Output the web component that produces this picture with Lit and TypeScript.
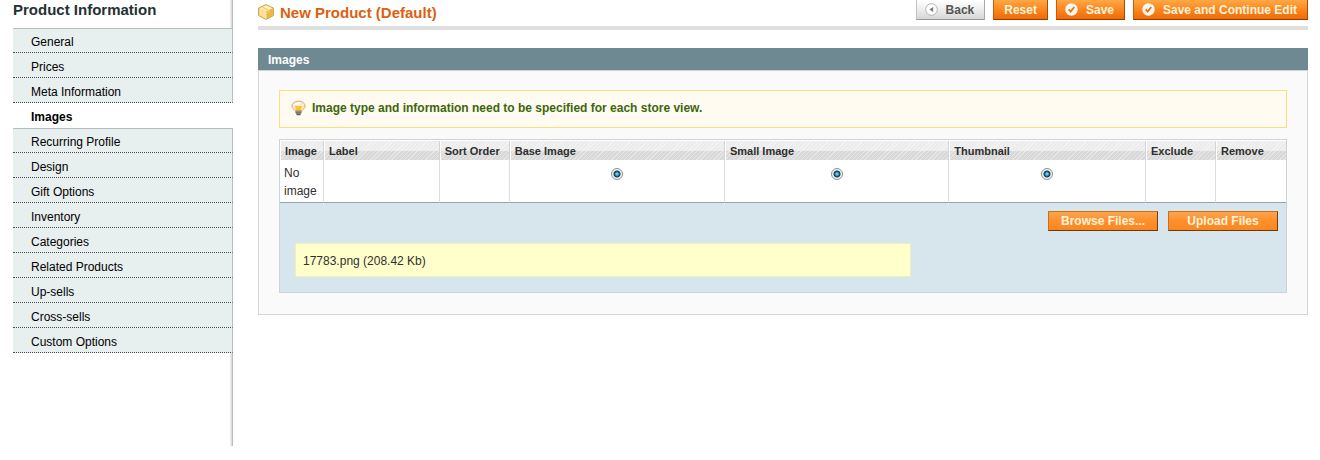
import { LitElement, html, css } from "lit";
import { customElement, state } from "lit/decorators.js";
import { classMap } from "lit/directives/class-map.js";

const TABS = [
  "General",
  "Prices",
  "Meta Information",
  "Images",
  "Recurring Profile",
  "Design",
  "Gift Options",
  "Inventory",
  "Categories",
  "Related Products",
  "Up-sells",
  "Cross-sells",
  "Custom Options",
];

const COLUMNS = [
  { id: "image", label: "Image" },
  { id: "label", label: "Label" },
  { id: "sort", label: "Sort Order" },
  { id: "base", label: "Base Image", radio: true },
  { id: "small", label: "Small Image", radio: true },
  { id: "thumb", label: "Thumbnail", radio: true },
  { id: "exclude", label: "Exclude" },
  { id: "remove", label: "Remove" },
];

const boxIcon = html`<svg class="icon-box" viewBox="0 0 16 16" aria-hidden="true">
  <path d="M8 0.6 L15.4 4 V11.6 L8 15.4 L0.6 11.6 V4 Z" fill="#f3c65c" stroke="#cf9f45" stroke-width="1" stroke-linejoin="round" />
  <path d="M8 1.2 L14.6 4.3 L8 7.6 L1.4 4.3 Z" fill="#fdf0cb" />
  <path d="M8 7.6 L14.9 4.4 V11.3 L8 14.9 Z" fill="#ecb544" />
  <path d="M1.2 4.6 L8 7.8 V14.8 L1.2 11.3 Z" fill="#fbe09a" />
  <path d="M5 2.7 L11.4 5.8 V8.6 L9.6 9.5 V6.8 L3.2 3.5 Z" fill="#f6cf74" />
  <path d="M8 7.7 V14.6" stroke="#fff3cf" stroke-width="0.7" />
</svg>`;

const bulbIcon = html`<svg class="icon-bulb" viewBox="0 0 16 16" aria-hidden="true">
  <path d="M8 0.7 C4 0.7 1 3 1 5.9 C1 8.4 3.4 9.4 4.6 11 H11.4 C12.6 9.4 15 8.4 15 5.9 C15 3 12 0.7 8 0.7 Z" fill="#fdeccb" stroke="#dba070" stroke-width="1" />
  <path d="M4.2 5.8 H11.8 L10.6 11 H5.4 Z" fill="#fbc52f" />
  <path d="M3.6 4 C5 2 8 1.8 9.6 2.4 L8.6 4.8 H3.8 Z" fill="#fff" />
  <path d="M4.8 10.8 H11.2 V13 L9.8 15.6 H6.2 L4.8 13 Z" fill="#62625e" />
  <path d="M4.8 11.9 H11.2 M5.4 13.5 H10.6" stroke="#c4c4bd" stroke-width="0.6" />
</svg>`;

const checkIcon = html`<svg class="icon" viewBox="0 0 13 13" aria-hidden="true">
  <circle cx="6.5" cy="6.5" r="6.2" fill="#fff6ea" />
  <path d="M3.7 6.4 L5.7 8.6 L9.3 4" fill="none" stroke="#dd7425" stroke-width="1.8" />
</svg>`;

const backIcon = html`<svg class="icon" viewBox="0 0 13 13" aria-hidden="true">
  <circle cx="6.5" cy="6.5" r="5.8" fill="#fff" stroke="#b4b4b4" stroke-width="1" />
  <path d="M8.2 4 V9 L4.4 6.5 Z" fill="#777" />
</svg>`;

@customElement("app-root")
export class AppRoot extends LitElement {
  @state() private active = "Images";

  static styles = css`
    :host {
      display: block;
      font: 12px/18px "Liberation Sans", Arial, sans-serif;
      color: #2f2f2f;
      background: #fff;
    }
    * {
      box-sizing: border-box;
    }
    .page {
      display: grid;
      grid-template-columns: 220px minmax(0, 1fr);
      column-gap: 25px;
      min-height: calc(100vh - 14px);
      margin-bottom: 14px;
      padding: 0 12px 0 13px;
    }
    .side {
      background: linear-gradient(90deg, #ececec 0 1px, #dedede 1px 2px, #b9bdbd 2px 3px) right / 3px 100% no-repeat;
    }
    .side-title {
      margin: 0;
      height: 28px;
      font-size: 15px;
      line-height: 20px;
      color: #253033;
    }
    .tabs {
      list-style: none;
      margin: 0;
      padding: 0;
    }
    .tab {
      display: block;
      height: 25px;
      padding: 5px 18px 0;
      line-height: 18px;
      color: #000;
      text-decoration: none;
      background: #e7efef;
      border-right: 1px solid #b4c0c0;
      border-bottom: 1px dotted #45494b;
    }
    .tab.edge {
      border-top: 1px solid #b4bebf;
      padding-top: 4px;
    }
    .tab.current {
      background: #fff;
      font-weight: bold;
      border-color: #fff;
    }
    .head {
      display: flex;
      justify-content: space-between;
      height: 30px;
      border-bottom: 4px solid #dfdfdf;
    }
    .title {
      display: flex;
      gap: 6px;
      margin: 0;
      padding-top: 4px;
      font-size: 15px;
      line-height: 18px;
      color: #dd5f10;
    }
    .icon-box {
      width: 16px;
      height: 16px;
    }
    .actions {
      display: flex;
      gap: 8px;
      height: 20px;
    }
    .btn {
      display: flex;
      align-items: center;
      justify-content: center;
      gap: 8px;
      padding: 0 10px;
      font: bold 12px/18px "Liberation Sans", Arial, sans-serif;
      color: #fff3dd;
      border: 1px solid #cf5a08;
      border-bottom-color: #8f3d05;
      border-right-color: #a94a08;
      background: linear-gradient(#ffa845, #fb8a22 45%, #f06a05);
    }
    .actions .btn {
      border-top: 0;
    }
    .btn.with-icon {
      padding-left: 8px;
    }
    .btn.back {
      color: #555;
      border-color: #c4c4c4 #a8a8a8 #989898 #c4c4c4;
      background: linear-gradient(#fff, #ededed 50%, #d6d6d6);
    }
    .icon {
      width: 13px;
      height: 13px;
    }
    .panel {
      margin-top: 18px;
    }
    .panel-title {
      margin: 0;
      padding: 3px 10px 1px;
      font-size: 12px;
      line-height: 18px;
      color: #fff;
      background: #6f8992;
    }
    .panel-body {
      padding: 19px 20px 21px;
      border: 1px solid #d6d6d6;
      border-top-color: #cdd3d5;
      background: #fafafa;
    }
    .note {
      display: flex;
      align-items: center;
      gap: 6px;
      margin: 0 0 11px;
      padding: 8px 11px 10px;
      font-weight: bold;
      color: #3d6611;
      border: 1px solid #fcdf7c;
      background: #fffbf0;
    }
    .icon-bulb {
      width: 15px;
      height: 16px;
    }
    .gallery {
      border: 1px solid #cbd3d4;
      background: #fff;
    }
    table {
      width: 100%;
      table-layout: fixed;
      border-collapse: separate;
      border-spacing: 0;
      padding-top: 1px;
    }
    .c-image {
      width: 44px;
    }
    .c-label {
      width: 11.5%;
    }
    .c-sort,
    .c-exclude,
    .c-remove {
      width: 70px;
    }
    .c-base {
      width: 21.4%;
    }
    .c-small {
      width: 22.3%;
    }
    th {
      height: 19px;
      padding: 1px 0 0 4px;
      text-align: left;
      font-size: 11px;
      line-height: 18px;
      white-space: nowrap;
      border-right: 1px solid #cfd4d4;
      border-left: 1px solid #fff;
      background:
        repeating-linear-gradient(135deg, rgba(255, 255, 255, 0.35) 0 1px, transparent 1px 3px),
        linear-gradient(#ececec 0 10px, #d8d8d8 10px);
      background-clip: padding-box;
    }
    td {
      height: 43px;
      padding: 4px 4px 1px;
      vertical-align: top;
      border-right: 1px solid #dadfe0;
      border-bottom: 1px solid #95a5a9;
    }
    th:last-child,
    td:last-child {
      border-right: 0;
    }
    .radio {
      appearance: none;
      display: block;
      width: 12px;
      height: 12px;
      margin: 4px auto 0;
      border: 1px solid #8a8f90;
      border-radius: 50%;
      background: #f4f6f6;
    }
    .radio:checked {
      background: radial-gradient(circle at 5px 5px, #6cc4ea 0 1px, #23739f 2px, #12384f 3px, #f4f6f6 4px);
    }
    .uploader {
      padding: 8px 8px 15px;
      background: #d7e5ed;
    }
    .upload-actions {
      display: flex;
      justify-content: flex-end;
      gap: 10px;
    }
    .upload-actions .btn {
      width: 110px;
      height: 20px;
      border-color: #c8711d #7c3c0a #70370a #c8711d;
      background: linear-gradient(#fba550, #ff8f2a 50%, #fb8720);
    }
    .file {
      width: 616px;
      max-width: 100%;
      margin: 12px 0 0 7px;
      padding: 8px 7px 6px;
      border: 1px solid #eeeec0;
      background: #ffffcc;
    }
  `;

  private select(e: Event, name: string) {
    e.preventDefault();
    this.active = name;
  }

  render() {
    return html`
      <div class="page">
        <nav class="side" aria-labelledby="side-title">
          <h3 class="side-title" id="side-title">Product Information</h3>
          <ul class="tabs">
            ${TABS.map(
              (name, i) => html`<li>
                <a
                  href="#"
                  class=${classMap({
                    tab: true,
                    current: name === this.active,
                    edge: i === 0 || TABS[i - 1] === this.active,
                  })}
                  @click=${(e: Event) => this.select(e, name)}
                  >${name}</a
                >
              </li>`
            )}
          </ul>
        </nav>
        <main>
          <header class="head">
            <h1 class="title">${boxIcon}<span>New Product (Default)</span></h1>
            <div class="actions">
              <button class="btn with-icon back" type="button">${backIcon}Back</button>
              <button class="btn" type="button">Reset</button>
              <button class="btn with-icon" type="button">${checkIcon}Save</button>
              <button class="btn with-icon" type="button">${checkIcon}Save and Continue Edit</button>
            </div>
          </header>
          <section class="panel">
            <h2 class="panel-title">Images</h2>
            <div class="panel-body">
              <p class="note">
                ${bulbIcon}<span>Image type and information need to be specified for each store view.</span>
              </p>
              <div class="gallery">
                <table>
                  <colgroup>
                    ${COLUMNS.map((c) => html`<col class="c-${c.id}" />`)}
                  </colgroup>
                  <thead>
                    <tr>
                      ${COLUMNS.map((c) => html`<th id="h-${c.id}" scope="col">${c.label}</th>`)}
                    </tr>
                  </thead>
                  <tbody>
                    <tr>
                      ${COLUMNS.map((c) =>
                        c.radio
                          ? html`<td>
                              <input class="radio" type="radio" name=${c.id} aria-labelledby="h-${c.id}" checked />
                            </td>`
                          : html`<td>${c.id === "image" ? "No image" : ""}</td>`
                      )}
                    </tr>
                  </tbody>
                </table>
                <div class="uploader">
                  <div class="upload-actions">
                    <button class="btn" type="button">Browse Files...</button>
                    <button class="btn" type="button">Upload Files</button>
                  </div>
                  <div class="file">17783.png (208.42 Kb)</div>
                </div>
              </div>
            </div>
          </section>
        </main>
      </div>
    `;
  }
}
